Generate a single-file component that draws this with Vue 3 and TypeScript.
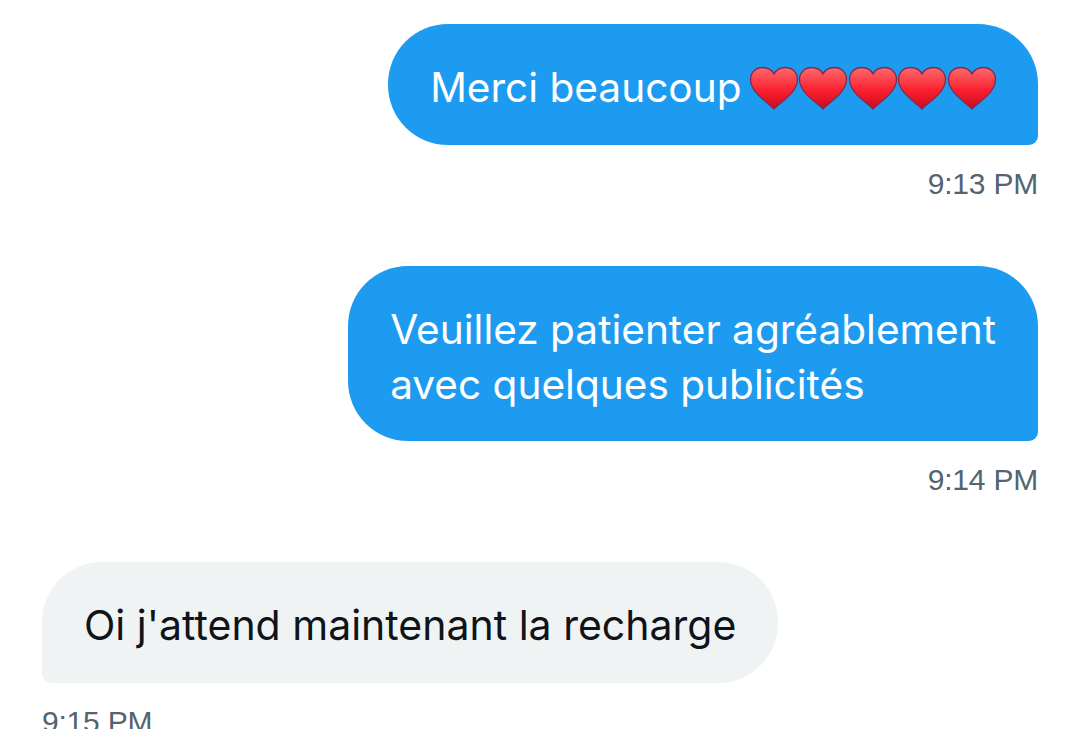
<template>
  <main class="chat">
    <div class="group group--sent">
      <div class="bubble bubble--sent one">
        Merci beaucoup
        <span class="hearts">
          <svg v-for="n in 5" :key="n" class="heart" viewBox="0 0 50 44">
            <defs>
              <linearGradient :id="`heart-${n}`" x1="0" y1="0" x2="0" y2="1">
                <stop offset="0" stop-color="#fb6a6c" />
                <stop offset="0.55" stop-color="#fc2030" />
                <stop offset="1" stop-color="#c80a1c" />
              </linearGradient>
            </defs>
            <path
              d="M25 43C20 37 1.500 27 1.500 13.500 1.500 6 7 1.500 13.500 1.500 18.500 1.500 23 4 25 8 27 4 31.500 1.500 36.500 1.500 43 1.500 48.500 6 48.500 13.500 48.500 27 30 37 25 43z"
              :fill="`url(#heart-${n})`"
              stroke="#7d2c52"
              stroke-width="1.300"
            />
          </svg>
        </span>
      </div>
      <div class="time">9:13 PM</div>
    </div>
    <div class="group group--sent next">
      <div class="bubble bubble--sent two">Veuillez patienter agréablement<br />avec quelques publicités</div>
      <div class="time">9:14 PM</div>
    </div>
    <div class="group next">
      <div class="bubble bubble--received">Oi j'attend maintenant la recharge</div>
      <div class="time">9:15 PM</div>
    </div>
  </main>
</template>

<script setup lang="ts">
</script>

<style>
html, body { margin: 0; background: #fff; overflow: hidden; }
</style>

<style scoped>
.chat {
  width: 1080px;
  height: 729px;
  overflow: hidden;
  box-sizing: border-box;
  padding: 24px 42px 0;
  display: flex;
  flex-direction: column;
  font-family: Inter, "Noto Sans", sans-serif;
}
.group { display: flex; flex-direction: column; align-items: flex-start; }
.group--sent { align-items: flex-end; }
.next { margin-top: 62px; }
.bubble {
  box-sizing: border-box;
  font-size: 40.6px;
  line-height: 55px;
  border-radius: 60px;
  padding: 36px 42px 30px;
  white-space: nowrap;
}
.bubble--sent { background: #1d9bf0; color: #fff; border-bottom-right-radius: 9px; }
.one { display: flex; align-items: center; gap: 7px; height: 121px; }
.two { height: 175px; }
.bubble--received { background: #eff3f4; color: #0f1419; border-bottom-left-radius: 9px; height: 121px; font-size: 41px; }
.hearts { display: flex; }
.heart { width: 50px; height: 44px; flex: none; margin-right: -0.5px; }
.time { margin-top: 19px; font-size: 30px; line-height: 40px; color: #536471; letter-spacing: -0.2px; font-family: "Liberation Sans", Arial, sans-serif; }
</style>
